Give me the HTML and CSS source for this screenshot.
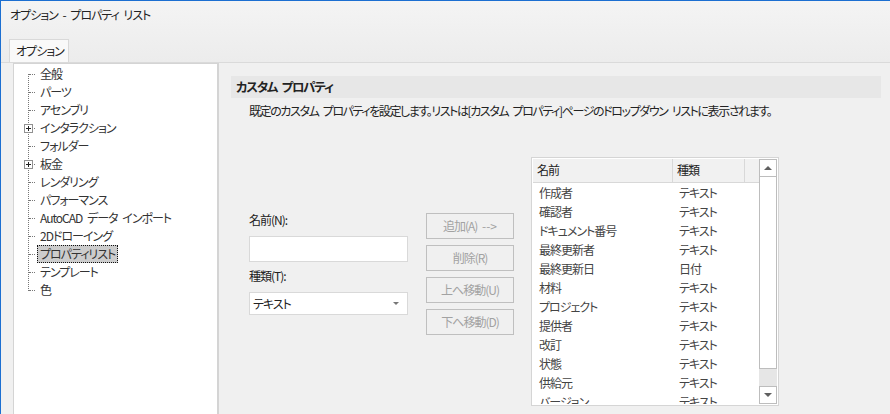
FILE: index.html
```html
<!DOCTYPE html>
<html lang="ja">
<head>
  <meta charset="UTF-8" />
  <title>オプション - プロパティ リスト</title>
  <link rel="stylesheet" href="styles.css">
</head>
<body>

  <header class="titlebar">
    <div class="title">オプション - プロパティ リスト</div>
    <div class="tabs">
      <div class="tab">オプション</div>
    </div>
  </header>

  <div class="main">
    <div class="tree">
      <ul class="tree-list">
        <li><span class="label">全般</span></li>
        <li><span class="label">パーツ</span></li>
        <li><span class="label">アセンブリ</span></li>
        <li><span class="expander"></span><span class="label">インタラクション</span></li>
        <li><span class="label">フォルダー</span></li>
        <li><span class="expander"></span><span class="label">板金</span></li>
        <li><span class="label">レンダリング</span></li>
        <li><span class="label">パフォーマンス</span></li>
        <li><span class="label">AutoCAD データ インポート</span></li>
        <li><span class="label">2Dドローイング</span></li>
        <li><span class="label selected">プロパティリスト</span></li>
        <li><span class="label">テンプレート</span></li>
        <li><span class="label">色</span></li>
      </ul>
    </div>

    <div class="pane">
      <div class="band">カスタム プロパティ</div>
      <p class="desc">既定のカスタム プロパティを設定します。リストは[カスタム プロパティ]ページのドロップダウン リストに表示されます。</p>

      <div class="form">
        <div class="fields">
          <div class="field-label">名前(N):</div>
          <div class="input"></div>
          <div class="field-label second">種類(T):</div>
          <div class="select">
            <span>テキスト</span>
            <span class="arrow"></span>
          </div>
        </div>

        <div class="buttons">
          <div class="btn">追加(A) <span class="arrow-text">--&gt;</span></div>
          <div class="btn">削除(R)</div>
          <div class="btn">上へ移動(U)</div>
          <div class="btn">下へ移動(D)</div>
        </div>

        <div class="listbox">
          <div class="table">
            <div class="thead">
              <div class="col-name">名前</div>
              <div class="col-type">種類</div>
              <div class="col-fill"></div>
            </div>
            <div class="rows" id="rows"></div>
          </div>
          <div class="scrollbar">
            <div class="sb-btn"><span class="tri-up"></span></div>
            <div class="sb-thumb"></div>
            <div class="sb-track"></div>
            <div class="sb-btn"><span class="tri-down"></span></div>
          </div>
        </div>
      </div>
    </div>
  </div>

  <script>
    const props = [
      ['作成者', 'テキスト'],
      ['確認者', 'テキスト'],
      ['ドキュメント番号', 'テキスト'],
      ['最終更新者', 'テキスト'],
      ['最終更新日', '日付'],
      ['材料', 'テキスト'],
      ['プロジェクト', 'テキスト'],
      ['提供者', 'テキスト'],
      ['改訂', 'テキスト'],
      ['状態', 'テキスト'],
      ['供給元', 'テキスト'],
      ['バージョン', 'テキスト']
    ];

    const rows = document.getElementById('rows');
    props.forEach(p => {
      const div = document.createElement('div');
      div.className = 'row';
      div.innerHTML = `<div class="col-name">${p[0]}</div><div class="col-type">${p[1]}</div>`;
      rows.appendChild(div);
    });
  </script>

</body>
</html>
```

FILE: styles.css
```css
* {
  box-sizing: border-box;
}

body {
  margin: 0;
  width: 890px;
  height: 414px;
  overflow: hidden;
  background: #f0f0f0;
  border-top: 1px solid #1c6fd1;
  border-left: 1px solid #1c6fd1;
  font-family: "Noto Sans CJK JP", "Noto Sans", sans-serif;
  font-size: 12px;
  font-feature-settings: "palt";
  letter-spacing: -1px;
  word-spacing: 3px;
  color: #333;
}

.titlebar {
  height: 62px;
  background: linear-gradient(#f4f4f4, #ececec);
  border-bottom: 1px solid #dadada;
}

.title {
  height: 38px;
  padding: 6px 0 0 9px;
  line-height: 16px;
  color: #222;
}

.tabs {
  display: flex;
  padding-left: 8px;
}

.tab {
  height: 23px;
  background: #f9f9f9;
  border: 1px solid #d9d9d9;
  border-bottom: none;
  padding: 0 4px 0 6px;
  line-height: 21px;
  color: #222;
}

.main {
  display: flex;
  height: 351px;
}

/* tree */

.tree {
  width: 206px;
  margin-left: 12px;
  background: #fff;
  border: 1px solid #d4d4d4;
  border-right-width: 2px;
  border-bottom: none;
  padding-top: 1px;
}

.tree-list {
  position: relative;
  list-style: none;
  margin: 0;
  padding: 0;
}

.tree-list::before {
  content: "";
  position: absolute;
  left: 14px;
  top: 9px;
  height: 217px;
  border-left: 1px dotted #777;
}

.tree-list li {
  position: relative;
  height: 18px;
  padding-left: 23px;
}

.tree-list li::before {
  content: "";
  position: absolute;
  left: 15px;
  top: 9px;
  width: 6px;
  border-top: 1px dotted #777;
}

.expander {
  position: absolute;
  left: 10px;
  top: 5px;
  width: 9px;
  height: 9px;
  background: #fff;
  border: 1px solid #919191;
  z-index: 1;
}

.expander::before {
  content: "";
  position: absolute;
  left: 1px;
  top: 3px;
  width: 5px;
  height: 1px;
  background: #222;
}

.expander::after {
  content: "";
  position: absolute;
  left: 3px;
  top: 1px;
  width: 1px;
  height: 5px;
  background: #222;
}

.label {
  display: inline-block;
  height: 18px;
  line-height: 16px;
  padding: 0 2px;
  border: 1px dotted transparent;
  white-space: nowrap;
}

.label.selected {
  background: #cccccc;
  border-color: #111;
}

/* right pane */

.pane {
  flex: 1;
  padding: 13px 9px 0 12px;
}

.band {
  height: 22px;
  background: #e7e7e7;
  padding-left: 5px;
  line-height: 21px;
  font-weight: bold;
  font-size: 12.5px;
  letter-spacing: -1.3px;
  color: #222;
}

.desc {
  margin: 5px 0 0 18px;
  line-height: 16px;
  letter-spacing: -1.4px;
  color: #222;
}

.form {
  display: flex;
  margin: 38px 0 0 18px;
}

.fields {
  width: 159px;
  padding-top: 55px;
}

.field-label {
  line-height: 16px;
  color: #222;
}

.field-label.second {
  margin-top: 6px;
}

.input {
  height: 26px;
  margin-top: 8px;
  background: #fff;
  border: 1px solid #d9d9d9;
}

.select {
  display: flex;
  justify-content: space-between;
  align-items: center;
  height: 23px;
  margin-top: 8px;
  padding: 0 8px 0 3px;
  background: #fff;
  border: 1px solid #d9d9d9;
  color: #222;
}

.arrow {
  width: 0;
  height: 0;
  border-left: 3px solid transparent;
  border-right: 3px solid transparent;
  border-top: 3px solid #777;
}

.buttons {
  display: flex;
  flex-direction: column;
  gap: 6px;
  width: 88px;
  margin-left: 18px;
  padding-top: 56px;
}

.btn {
  height: 26px;
  border: 1px solid #bfbfbf;
  text-align: center;
  line-height: 24px;
  color: #a2a2a2;
}

.arrow-text {
  letter-spacing: 0;
}

/* list */

.listbox {
  display: flex;
  width: 248px;
  height: 249px;
  margin-left: 17px;
  background: #fff;
  border: 1px solid #d5d5d5;
  padding: 1px;
}

.table {
  flex: 1;
  overflow: hidden;
}

.thead {
  display: flex;
  height: 24px;
  background: #f1f1f1;
  border-bottom: 1px solid #d8d8d8;
  line-height: 22px;
  color: #222;
}

.thead .col-name {
  width: 140px;
  padding-left: 4px;
  border-right: 1px solid #d8d8d8;
}

.thead .col-type {
  width: 72px;
  padding-left: 4px;
  border-right: 1px solid #d8d8d8;
}

.thead .col-fill {
  flex: 1;
}

.row {
  display: flex;
  height: 19px;
  line-height: 19px;
  color: #444;
}

.row .col-name {
  width: 140px;
  padding-left: 6px;
}

.row .col-type {
  padding-left: 6px;
}

.scrollbar {
  display: flex;
  flex-direction: column;
  width: 18px;
  background: #e6e6e6;
}

.sb-btn {
  display: flex;
  justify-content: center;
  align-items: center;
  height: 18px;
  background: #fff;
  border: 1px solid #bdbdbd;
}

.sb-thumb {
  height: 193px;
  margin-top: -1px;
  background: #fff;
  border: 1px solid #bdbdbd;
}

.sb-track {
  flex: 1;
}

.tri-up {
  border-left: 4px solid transparent;
  border-right: 4px solid transparent;
  border-bottom: 4px solid #606060;
}

.tri-down {
  border-left: 4px solid transparent;
  border-right: 4px solid transparent;
  border-top: 4px solid #606060;
}
```
